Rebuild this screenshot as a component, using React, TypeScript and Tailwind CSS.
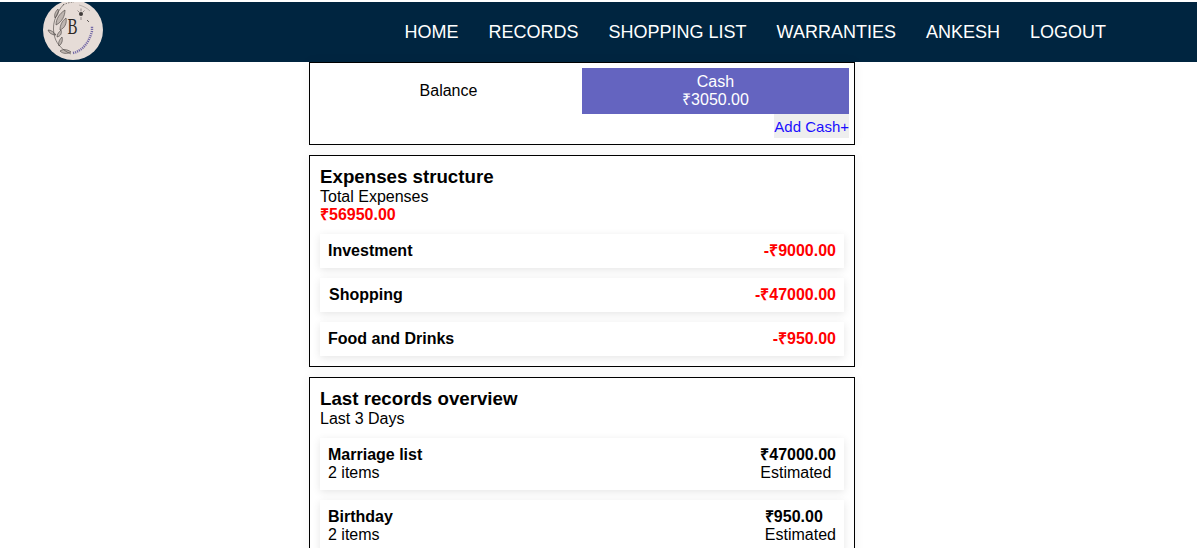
const navItems = ['HOME', 'RECORDS', 'SHOPPING LIST', 'WARRANTIES', 'ANKESH', 'LOGOUT'];

const expenses = [
  { name: 'Investment', amount: '-₹9000.00' },
  { name: 'Shopping', amount: '-₹47000.00', nudge: true },
  { name: 'Food and Drinks', amount: '-₹950.00' },
];

function Logo() {
  return (
    <svg viewBox="0 0 60 60" className="h-[60px] w-[60px] shrink-0">
      <circle cx="30" cy="30" r="30" fill="#e6dcd7" />
      {/* wreath on the left */}
      <g fill="#8d8580" fillOpacity="0.45" stroke="#45403e" strokeWidth="0.6">
        <path d="M13 25c0-6 3-11 9-15 0 6-3 12-9 15z" />
        <path d="M12 18c-1-3 0-6 3-9 1 3 0 6-3 9z" />
        <path d="M17 30c0-5 2-9 6-12 1 5-1 10-6 12z" />
        <path d="M13 35c-2-3-5-5-8-5 1 3 4 5 8 5z" />
        <path d="M14 37c0-3 2-5 4-7 1 3 0 6-4 7z" />
        <path d="M16 46c-1-3 0-6 3-9 1 3 0 7-3 9z" />
        <path d="M17 51c3-2 7-2 11 1-4 2-8 2-11-1z" />
      </g>
      <g fill="none" stroke="#45403e" strokeWidth="0.6">
        <path d="M21 4C12 14 8 26 12 38c2 6 7 12 16 16" />
        <path d="M20 5c4-2 8-3 11-3" strokeDasharray="1.5 1.2" />
        <path d="M36 5c4 1 8 3 11 6" strokeWidth="0.3" />
      </g>
      <text x="24.5" y="34" fontSize="23" fill="#2c2826" fontWeight="300" className="[font-family:'Liberation_Serif',serif]" textLength="10" lengthAdjust="spacingAndGlyphs">B</text>
      <circle cx="38" cy="14" r="2" fill="#3f3a39" />
      <path d="M34.5 10.500l2 2M41.500 10.500l-2 2M38 8.500v3M38 17v3" stroke="#5c5654" strokeWidth="0.6" />
      <path d="M44 20l2 2" stroke="#3f3a39" strokeWidth="0.8" />
      <path d="M30 53c9-2 16-10 19-22 0-2 0-3 0-5" fill="none" stroke="#7469a6" strokeWidth="2.4" strokeDasharray="1.200 0.900" />
    </svg>
  );
}

function Card({ children, className }: { children: React.ReactNode; className: string }) {
  return <div className={`w-[546px] border border-black bg-white shadow-[0_0_10px_rgba(0,0,0,0.06)] ${className}`}>{children}</div>;
}

function Row({ children, className }: { children: React.ReactNode; className: string }) {
  return (
    <div className={`flex justify-between bg-white pl-[8px] pr-[8px] shadow-[0_2px_8px_rgba(0,0,0,0.1)] ${className}`}>
      {children}
    </div>
  );
}

export default function App() {
  return (
    <div className="h-[548px] overflow-hidden bg-white pt-[2px] text-[16px] leading-[18px] text-black [font-family:'Liberation_Sans',Arial,sans-serif]">
      <header className="flex h-[60px] items-center justify-between overflow-hidden bg-[#002540] pl-[43px] pr-[91px]">
        <div className="-mt-[4px] h-[60px]">
          <Logo />
        </div>
        <nav className="flex gap-[30px] text-[18px] text-white">
          {navItems.map((item) => (
            <a key={item}>{item}</a>
          ))}
        </nav>
      </header>

      <main className="flex flex-col items-start gap-[10px] pl-[309px]">
        <Card className="h-[83px] px-[5px] pt-[5px]">
          <div className="flex">
            <div className="flex h-[46px] w-[267px] items-center justify-center">Balance</div>
            <div className="flex h-[46px] w-[267px] flex-col items-center justify-center bg-[#6464c0] text-white">
              <span>Cash</span>
              <span>₹3050.00</span>
            </div>
          </div>
          <div className="flex justify-end">
            <a className="block h-[24px] bg-[#eeeeee] text-[15px] leading-[25px] text-[#1a0dff]">Add Cash+</a>
          </div>
        </Card>

        <Card className="h-[212px] px-[10px] pt-[10px]">
          <h2 className="text-[18.72px] leading-[22px] font-bold">Expenses structure</h2>
          <p>Total Expenses</p>
          <p className="font-bold text-[#ff0000]">₹56950.00</p>
          <div className="mt-[10px] flex flex-col gap-[10px]">
            {expenses.map((row) => (
              <Row key={row.name} className="h-[34px] items-center font-bold">
                <span className={row.nudge ? 'pl-[1px]' : ''}>{row.name}</span>
                <span className="text-[#ff0000]">{row.amount}</span>
              </Row>
            ))}
          </div>
        </Card>

        <Card className="h-[200px] px-[10px] pt-[10px]">
          <h2 className="text-[18.72px] leading-[22px] font-bold">Last records overview</h2>
          <p>Last 3 Days</p>
          <div className="mt-[10px] flex flex-col gap-[10px]">
            <Row className="h-[52px] items-center">
              <div>
                <div className="font-bold">Marriage list</div>
                <div>2 items</div>
              </div>
              <div>
                <div className="font-bold">₹47000.00</div>
                <div>Estimated</div>
              </div>
            </Row>
            <Row className="h-[52px] items-center">
              <div>
                <div className="font-bold">Birthday</div>
                <div>2 items</div>
              </div>
              <div>
                <div className="font-bold">₹950.00</div>
                <div>Estimated</div>
              </div>
            </Row>
          </div>
        </Card>
      </main>
    </div>
  );
}
